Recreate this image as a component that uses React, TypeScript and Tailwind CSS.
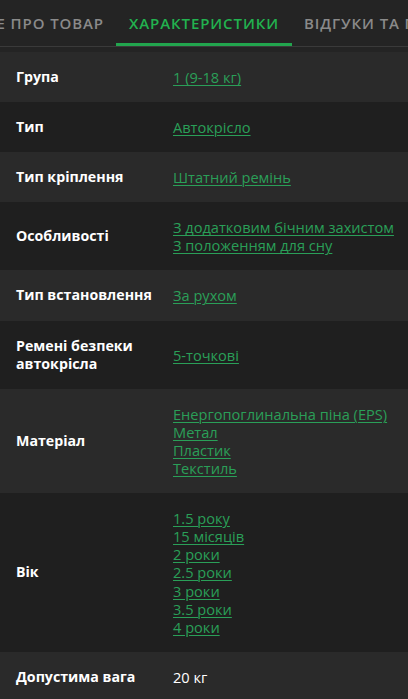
import React from 'react';

type Spec = { label: string; values: string[]; link?: boolean };

const specs: Spec[] = [
  { label: 'Група', values: ['1 (9-18 кг)'] },
  { label: 'Тип', values: ['Автокрісло'] },
  { label: 'Тип кріплення', values: ['Штатний ремінь'] },
  { label: 'Особливості', values: ['З додатковим бічним захистом', 'З положенням для сну'] },
  { label: 'Тип встановлення', values: ['За рухом'] },
  { label: 'Ремені безпеки автокрісла', values: ['5-точкові'] },
  { label: 'Матеріал', values: ['Енергопоглинальна піна (EPS)', 'Метал', 'Пластик', 'Текстиль'] },
  { label: 'Вік', values: ['1.5 року', '15 місяців', '2 роки', '2.5 роки', '3 роки', '3.5 роки', '4 роки'] },
  { label: 'Допустима вага', values: ['20 кг'], link: false },
];

export default function App() {
  return (
    <div className="w-[408px] h-[699px] overflow-hidden bg-[#242424] font-['Open_Sans',sans-serif]">
      {/* tabs, scrolled so the active one sits in view */}
      <div className="flex h-[47px] border-b border-[#3a3a3a] overflow-hidden whitespace-nowrap text-[15px] font-semibold uppercase tracking-[0.9px]">
        <div className="flex justify-end w-[116px] shrink-0 overflow-hidden pr-3 pt-[12px] h-[46px] text-[#8a8a8a]">
          <span>Все про товар</span>
        </div>
        <div className="shrink-0 w-[176px] text-center pt-[12px] h-[46px] text-[#22b24f] border-b-[3px] border-[#22a54e]">
          Характеристики
        </div>
        <div className="shrink-0 px-3 pt-[12px] h-[46px] text-[#8a8a8a]">Відгуки та питання</div>
      </div>
      <div className="mt-[5px]">
        {specs.map((s, i) => (
          <div
            key={s.label}
            className={`flex items-center pl-4 pr-2 py-4 leading-[18.1px] ${i % 2 === 0 ? 'bg-[#2a2a2a]' : 'bg-[#1f1f1f]'}`}
          >
            <div className="w-[157px] shrink-0 pr-3 text-[14.2px] font-bold text-white">{s.label}</div>
            <div className="flex flex-col items-start text-[14.6px] whitespace-nowrap">
              {s.values.map((v) =>
                s.link === false ? (
                  <span key={v} className="text-white">{v}</span>
                ) : (
                  <a key={v} href="#" className="text-[#2a9f58] underline underline-offset-2 decoration-1">
                    {v}
                  </a>
                )
              )}
            </div>
          </div>
        ))}
      </div>
    </div>
  );
}
